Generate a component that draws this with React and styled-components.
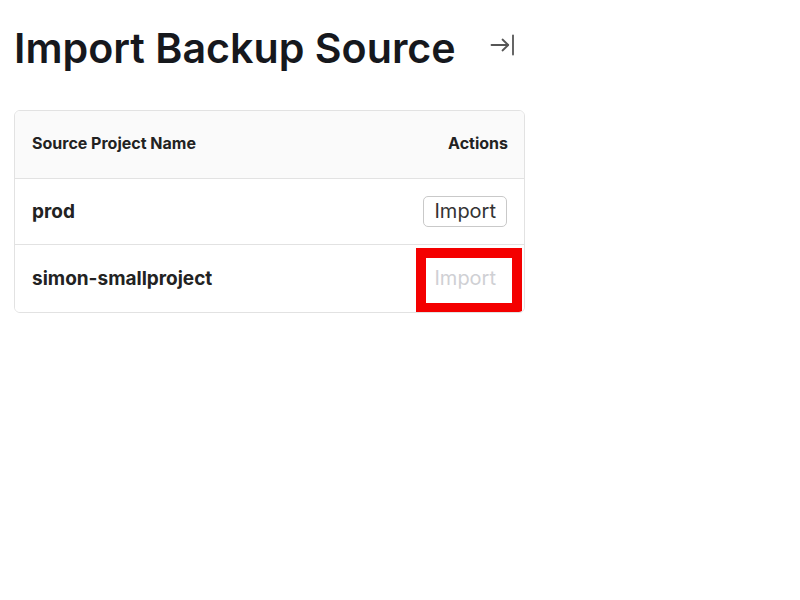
import React from "react";
import styled, { createGlobalStyle } from "styled-components";

const Global = createGlobalStyle`
  html, body { margin: 0; padding: 0; background: #ffffff; }
  body { font-family: Inter, "Noto Sans", sans-serif; color: #1a1a1a; }
`;

const Page = styled.div`
  padding: 24px 14px;
  width: 511px;
`;

const Header = styled.div`
  display: flex;
  align-items: center;
  gap: 32px;
  margin-bottom: 38px;
`;

const Title = styled.h1`
  margin: 0;
  font-size: 41.2px;
  line-height: 48px;
  font-weight: 600;
  color: #16181d;
`;

const IconButton = styled.button`
  border: none;
  background: none;
  padding: 0;
  display: flex;
  color: #555;
  margin-top: -6px;
`;

const Table = styled.div`
  border: 1px solid #e2e2e2;
  border-radius: 6px;
  overflow: hidden;
`;

const Row = styled.div`
  display: flex;
  align-items: center;
  justify-content: space-between;
  box-sizing: border-box;
  height: ${(p) => p.$h}px;
  padding: 0 ${(p) => (p.$head ? 16 : 17)}px ${(p) => (p.$head ? 3 : 0)}px 17px;
  background: ${(p) => (p.$head ? "#fafafa" : "#ffffff")};
  & + & { border-top: 1px solid #e2e2e2; }
`;

const HeadCell = styled.span`
  font-size: 16px;
  font-weight: 700;
  color: #222;
`;

const NameCell = styled.span`
  font-size: 19px;
  font-weight: 700;
  color: #222;
`;

const Cell = styled.div`
  position: relative;
  display: flex;
`;

const ImportButton = styled.button`
  font-family: inherit;
  font-size: 20px;
  line-height: 23px;
  padding: 3px 10px;
  background: #fff;
  border-radius: 5px;
  border: 1px solid ${(p) => (p.disabled ? "transparent" : "#c9c9c9")};
  color: ${(p) => (p.disabled ? "#cfd0d4" : "#333")};
`;

const Highlight = styled.div`
  position: absolute;
  box-sizing: border-box;
  left: -7px;
  top: -15px;
  width: 106px;
  height: 65px;
  border: 10px solid #f40000;
  pointer-events: none;
`;

const CollapseIcon = () => (
  <svg width="28" height="28" viewBox="0 0 28 28" fill="none" stroke="currentColor" strokeWidth="1.8" strokeLinecap="round" strokeLinejoin="round">
    <path d="M3.5 14H20" />
    <path d="M14.5 8.5 20.2 14l-5.7 5.5" />
    <path d="M25 4.5v19" />
  </svg>
);

const rows = [
  { name: "prod", disabled: false, h: 66 },
  { name: "simon-smallproject", disabled: true, h: 68 },
];

export default function App() {
  return (
    <>
      <Global />
      <Page>
        <Header>
          <Title>Import Backup Source</Title>
          <IconButton aria-label="collapse">
            <CollapseIcon />
          </IconButton>
        </Header>
        <Table>
          <Row $head $h={67}>
            <HeadCell>Source Project Name</HeadCell>
            <HeadCell>Actions</HeadCell>
          </Row>
          {rows.map((r) => (
            <Row key={r.name} $h={r.h}>
              <NameCell>{r.name}</NameCell>
              <Cell>
                <ImportButton disabled={r.disabled}>Import</ImportButton>
                {r.disabled && <Highlight />}
              </Cell>
            </Row>
          ))}
        </Table>
      </Page>
    </>
  );
}
